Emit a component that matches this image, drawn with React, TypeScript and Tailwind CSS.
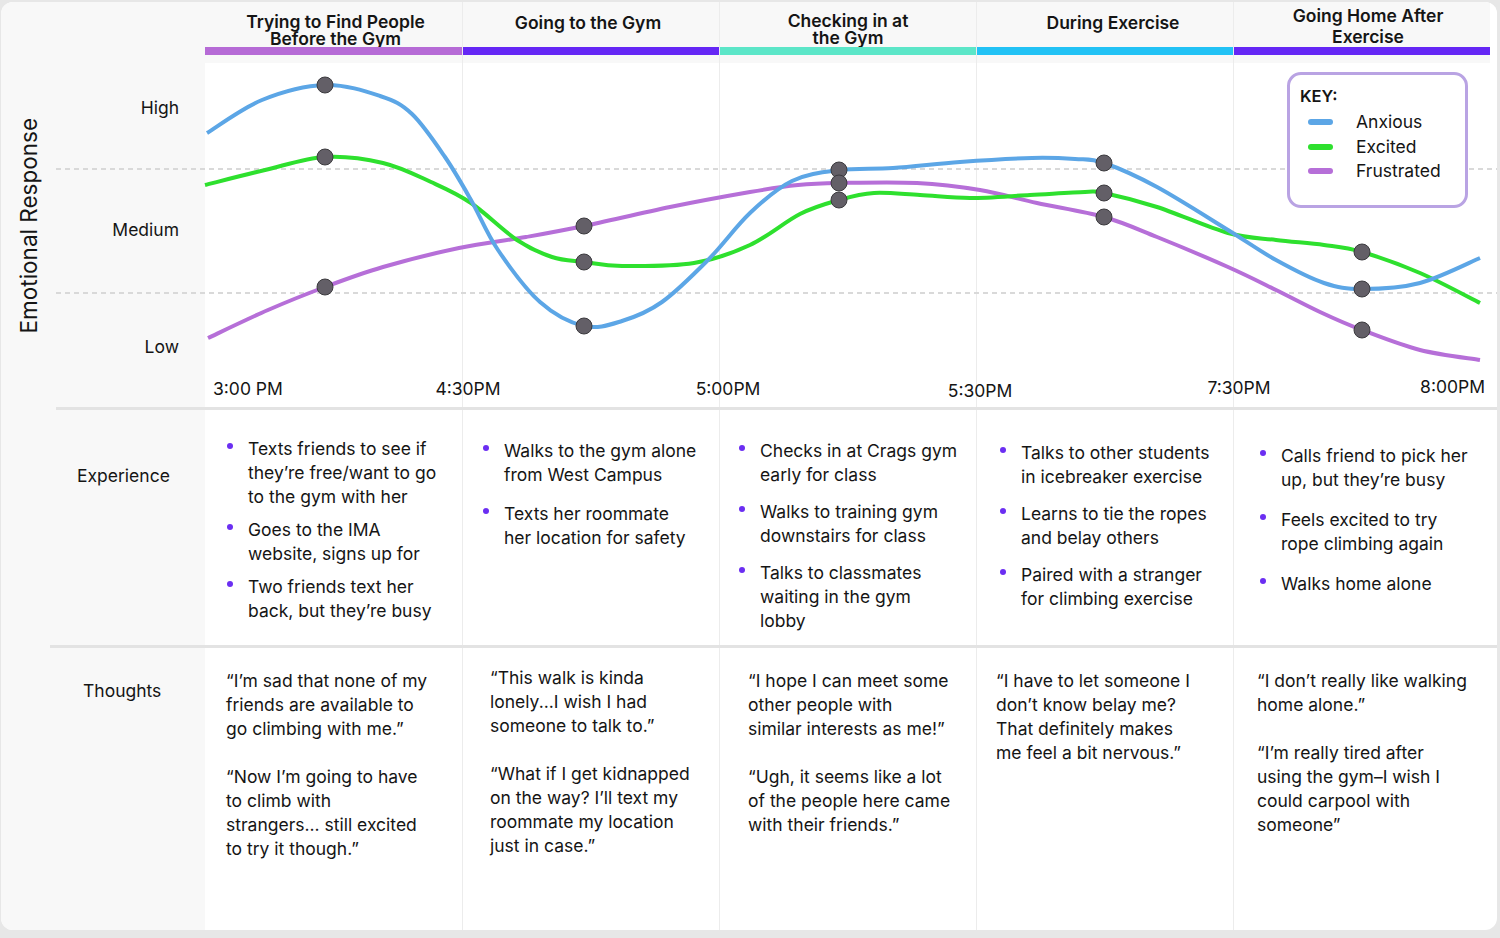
import React from "react";

type Pt = [number, number];

// curve samples in page coordinates
const anxious: Pt[] = [
  [207, 133], [262, 100], [325, 85], [380, 96], [412, 114], [445, 157], [471, 200], [498, 250],
  [540, 302], [584, 326], [622, 321], [662, 302], [708, 260], [750, 213], [792, 181], [839, 170],
  [893, 168], [960, 162], [1032, 158], [1075, 159], [1104, 163], [1157, 187], [1228, 230],
  [1276, 260], [1324, 283], [1362, 289], [1420, 283], [1480, 258],
];

const excited: Pt[] = [
  [205, 185], [265, 170], [325, 157], [383, 163], [431, 182], [471, 203], [517, 240], [552, 257],
  [584, 262], [622, 266], [694, 263], [750, 245], [800, 214], [839, 200], [874, 193], [920, 195],
  [970, 198], [1030, 195], [1085, 192], [1104, 193], [1157, 207], [1228, 233], [1276, 240],
  [1324, 245], [1362, 252], [1420, 273], [1480, 303],
];

const frustrated: Pt[] = [
  [208, 338], [268, 310], [325, 287], [383, 267], [459, 248], [526, 237], [584, 226], [670, 207],
  [750, 192], [798, 185], [839, 183], [917, 183], [980, 190], [1037, 203], [1104, 217],
  [1157, 237], [1228, 267], [1276, 290], [1320, 312], [1362, 330], [1420, 350], [1480, 360],
];

const dots: Pt[] = [
  [325, 85], [584, 326], [839, 170], [1104, 163], [1362, 289],
  [325, 157], [584, 262], [839, 200], [1104, 193], [1362, 252],
  [325, 287], [584, 226], [839, 183], [1104, 217], [1362, 330],
];

function smooth(pts: Pt[]) {
  let d = `M${pts[0][0]},${pts[0][1]}`;
  for (let i = 0; i < pts.length - 1; i++) {
    const p0 = pts[i - 1] || pts[i];
    const p1 = pts[i];
    const p2 = pts[i + 1];
    const p3 = pts[i + 2] || p2;
    const c1x = p1[0] + (p2[0] - p0[0]) / 6;
    const c1y = p1[1] + (p2[1] - p0[1]) / 6;
    const c2x = p2[0] - (p3[0] - p1[0]) / 6;
    const c2y = p2[1] - (p3[1] - p1[1]) / 6;
    d += ` C${c1x.toFixed(1)},${c1y.toFixed(1)} ${c2x.toFixed(1)},${c2y.toFixed(1)} ${p2[0]},${p2[1]}`;
  }
  return d;
}

const stages = [
  {
    title: ["Trying to Find People", "Before the Gym"],
    titleCls: "pt-[11px] leading-[17px] pl-[4px]",
    bar: "bg-[#b66bd6]",
    expCls: "pt-[27px] pl-[22px] gap-[9px]",
    exp: [
      ["Texts friends to see if", "they’re free/want to go", "to the gym with her"],
      ["Goes to the IMA", "website, signs up for"],
      ["Two friends text her", "back, but they’re busy"],
    ],
    thCls: "pt-[21px] pl-[21px]",
    thoughts: [
      ["“I’m sad that none of my", "friends are available to", "go climbing with me.”"],
      ["“Now I’m going to have", "to climb with", "strangers... still excited", "to try it though.”"],
    ],
  },
  {
    title: ["Going to the Gym"],
    titleCls: "pt-[9px] leading-[24px] pr-[6px]",
    bar: "bg-[#6527f5]",
    expCls: "pt-[29px] pl-[20px] gap-[15px]",
    exp: [
      ["Walks to the gym alone", "from West Campus"],
      ["Texts her roommate", "her location for safety"],
    ],
    thCls: "pt-[18px] pl-[27px]",
    thoughts: [
      ["“This walk is kinda", "lonely...I wish I had", "someone to talk to.”"],
      ["“What if I get kidnapped", "on the way? I’ll text my", "roommate my location", "just in case.”"],
    ],
  },
  {
    title: ["Checking in at", "the Gym"],
    titleCls: "pt-[10px] leading-[17px]",
    bar: "bg-[#5ce6c8]",
    expCls: "pt-[29px] pl-[19px] gap-[13px]",
    exp: [
      ["Checks in at Crags gym", "early for class"],
      ["Walks to training gym", "downstairs for class"],
      ["Talks to classmates", "waiting in the gym", "lobby"],
    ],
    thCls: "pt-[21px] pl-[28px]",
    thoughts: [
      ["“I hope I can meet some", "other people with", "similar interests as me!”"],
      ["“Ugh, it seems like a lot", "of the people here came", "with their friends.”"],
    ],
  },
  {
    title: ["During Exercise"],
    titleCls: "pt-[9px] leading-[24px] pl-[16px]",
    bar: "bg-[#22c2f5]",
    expCls: "pt-[31px] pl-[23px] gap-[13px]",
    exp: [
      ["Talks to other students", "in icebreaker exercise"],
      ["Learns to tie the ropes", "and belay others"],
      ["Paired with a stranger", "for climbing exercise"],
    ],
    thCls: "pt-[21px] pl-[19px]",
    thoughts: [
      ["“I have to let someone I", "don’t know belay me?", "That definitely makes", "me feel a bit nervous.”"],
    ],
  },
  {
    title: ["Going Home After", "Exercise"],
    titleCls: "pt-[3px] leading-[21px] pl-[12px]",
    bar: "bg-[#6527f5]",
    expCls: "pt-[34px] pl-[26px] gap-[16px]",
    exp: [
      ["Calls friend to pick her", "up, but they’re busy"],
      ["Feels excited to try", "rope climbing again"],
      ["Walks home alone"],
    ],
    thCls: "pt-[21px] pl-[23px]",
    thoughts: [
      ["“I don’t really like walking", "home alone.”"],
      ["“I’m really tired after", "using the gym–I wish I", "could carpool with", "someone”"],
    ],
  },
];

const times = [
  { label: "4:30PM", cls: "ml-[5px]" },
  { label: "5:00PM", cls: "ml-[8px]" },
  { label: "5:30PM", cls: "ml-[3px] mb-[-2px]" },
  { label: "7:30PM", cls: "ml-[5px] mb-[1px]" },
];

const key = [
  { label: "Anxious", color: "bg-[#5ca6e6]" },
  { label: "Excited", color: "bg-[#2ee02e]" },
  { label: "Frustrated", color: "bg-[#b66fd8]" },
];

function colBorder(i: number) {
  return i > 0 ? "border-l border-[#ececec]" : "";
}

function Chart() {
  return (
    <svg
      className="absolute inset-0 pointer-events-none"
      width={1496}
      height={344}
      viewBox="1 63 1496 344"
    >
      <line x1={56} y1={169} x2={1497} y2={169} stroke="#d9d9d9" strokeWidth={2} strokeDasharray="5 4" />
      <line x1={56} y1={293} x2={1497} y2={293} stroke="#d9d9d9" strokeWidth={2} strokeDasharray="5 4" />
      <path d={smooth(frustrated)} fill="none" stroke="#b66fd8" strokeWidth={4} />
      <path d={smooth(excited)} fill="none" stroke="#2ee02e" strokeWidth={4} />
      <path d={smooth(anxious)} fill="none" stroke="#5ca6e6" strokeWidth={4} />
      {dots.map(([x, y], i) => (
        <circle key={i} cx={x} cy={y} r={8} fill="#635f67" stroke="#3b3a3e" strokeWidth={1} />
      ))}
    </svg>
  );
}

export default function App() {
  return (
    <div className="w-[1500px] h-[938px] bg-[#e7e7e7] pt-[2px] pl-[1px] font-['Inter',sans-serif] text-[#151515] overflow-hidden">
      <div className="w-[1496px] h-[928px] rounded-[12px] bg-white overflow-hidden flex flex-col">
        {/* stage titles */}
        <div className="flex h-[61px] bg-[#f8f8f8] shrink-0">
          <div className="w-[204px] shrink-0" />
          {stages.map((s, i) => (
            <div key={i} className={`w-[257px] shrink-0 flex flex-col ${colBorder(i)}`}>
              <div className={`h-[45px] text-center font-semibold text-[17.5px] whitespace-nowrap ${s.titleCls}`}>
                {s.title.map((l) => (
                  <div key={l}>{l}</div>
                ))}
              </div>
              <div className={`h-[8px] ${s.bar}`} />
            </div>
          ))}
          <div className="flex-1 bg-white" />
        </div>

        {/* chart */}
        <div className="relative flex h-[344px] shrink-0">
          <div className="w-[204px] shrink-0 bg-[#f8f8f8] flex">
            <div className="w-[56px] flex items-center justify-center pb-[18px]">
              <span className="[writing-mode:vertical-rl] rotate-180 text-[22.5px] leading-none whitespace-nowrap">
                Emotional Response
              </span>
            </div>
            <div className="flex-1 flex flex-col items-end pr-[26px] text-[17.5px] leading-[24px]">
              <span className="mt-[33px]">High</span>
              <span className="mt-[98px]">Medium</span>
              <span className="mt-[93px]">Low</span>
            </div>
          </div>
          {stages.map((s, i) => (
            <div
              key={i}
              className={`w-[257px] shrink-0 flex items-end pb-[6px] text-[17.5px] leading-[24px] ${colBorder(i)}`}
            >
              {i === 0 ? (
                <span className="ml-[8px]">3:00 PM</span>
              ) : (
                <span className={`-translate-x-1/2 whitespace-nowrap ${times[i - 1].cls}`}>
                  {times[i - 1].label}
                </span>
              )}
              {i === 4 && <span className="ml-auto mr-[5px] mb-[2px]">8:00PM</span>}
            </div>
          ))}
          <div className="flex-1" />
          <Chart />
          <div className="absolute left-[1286px] top-[9px] w-[181px] h-[136px] rounded-[14px] border-[3px] border-[#b9a3e3] bg-white pt-[9px] pl-[10px]">
            <div className="text-[16.5px] font-semibold leading-[24px]">KEY:</div>
            <div className="mt-[2px] flex flex-col">
              {key.map((k) => (
                <div key={k.label} className="flex items-center h-[24.5px]">
                  <span className={`ml-[8px] w-[25px] h-[6px] rounded-full ${k.color}`} />
                  <span className="ml-[23px] text-[17.5px]">{k.label}</span>
                </div>
              ))}
            </div>
          </div>
        </div>

        <div className="flex h-[3px] shrink-0">
          <div className="w-[55px] bg-[#f8f8f8]" />
          <div className="flex-1 bg-[#e3e3e3]" />
        </div>

        {/* experience */}
        <div className="flex h-[235px] shrink-0 text-[17.5px] leading-[24px]">
          <div className="w-[204px] shrink-0 bg-[#f8f8f8] pl-[76px] pt-[54px]">Experience</div>
          {stages.map((s, i) => (
            <div key={i} className={`w-[257px] shrink-0 flex flex-col ${s.expCls} ${colBorder(i)}`}>
              {s.exp.map((item, j) => (
                <div key={j} className="flex">
                  <span className="w-[21px] shrink-0 pt-[6px]">
                    <span className="block w-[6px] h-[6px] rounded-full bg-[#6b2ef2]" />
                  </span>
                  <div className="whitespace-nowrap">
                    {item.map((l) => (
                      <div key={l}>{l}</div>
                    ))}
                  </div>
                </div>
              ))}
            </div>
          ))}
          <div className="flex-1" />
        </div>

        <div className="flex h-[3px] shrink-0">
          <div className="w-[49px] bg-[#f8f8f8]" />
          <div className="flex-1 bg-[#e3e3e3]" />
        </div>

        {/* thoughts */}
        <div className="flex flex-1 text-[17.5px] leading-[24px]">
          <div className="w-[204px] shrink-0 bg-[#f8f8f8] pl-[82px] pt-[31px]">Thoughts</div>
          {stages.map((s, i) => (
            <div key={i} className={`w-[257px] shrink-0 flex flex-col gap-[24px] ${s.thCls} ${colBorder(i)}`}>
              {s.thoughts.map((p, j) => (
                <div key={j} className="whitespace-nowrap">
                  {p.map((l) => (
                    <div key={l}>{l}</div>
                  ))}
                </div>
              ))}
            </div>
          ))}
          <div className="flex-1" />
        </div>
      </div>
    </div>
  );
}
